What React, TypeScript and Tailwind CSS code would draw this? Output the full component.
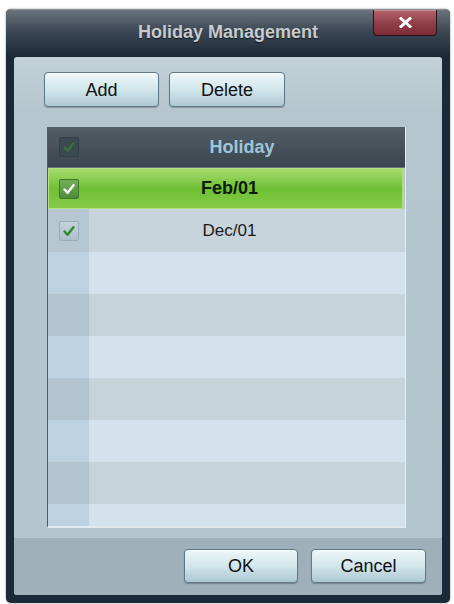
import React from 'react'

const font = "font-['Liberation_Sans',Arial,sans-serif]"

function Check({ variant }: { variant: 'header' | 'on' | 'plain' }) {
  const box =
    variant === 'on'
      ? 'bg-gradient-to-b from-[#74ae58] to-[#4e8c3a] border-[#3f7630]'
      : variant === 'header'
        ? 'bg-[#3b4950] border-[#323f46]'
        : 'bg-gradient-to-b from-[#c4d2d9] to-[#aebfc9] border-[#98abb6]'
  const stroke = variant === 'on' ? '#ffffff' : variant === 'header' ? '#3f6d3c' : '#2f8a2a'
  return (
    <div className={`w-[20px] h-[20px] rounded-[2px] border flex items-center justify-center ${box}`}>
      <svg width="14" height="14" viewBox="0 0 14 14">
        <polyline
          points="2.5,7.5 5.5,10.8 11.5,3.2"
          fill="none"
          stroke={stroke}
          strokeWidth="2.4"
          strokeLinecap="round"
          strokeLinejoin="round"
        />
      </svg>
    </div>
  )
}

function Btn({ label, w, h }: { label: string; w: string; h: string }) {
  return (
    <button
      type="button"
      className={`${w} ${h} rounded-[4px] border border-[#5d7886] bg-gradient-to-b from-[#eef8fa] via-[#d2e6ec] to-[#adc8d3] shadow-[inset_0_1px_0_#ffffff,0_1px_1px_rgba(0,0,0,0.25)] text-[18px] text-[#111] leading-none flex items-center justify-center`}
    >
      {label}
    </button>
  )
}

function Row({ tone, h }: { tone: 'dark' | 'light'; h: string }) {
  return (
    <div className={`flex ${h}`}>
      <div className={`w-[41px] ${tone === 'dark' ? 'bg-[#b1c4d0]' : 'bg-[#bdd3e1]'}`} />
      <div className={`flex-1 ${tone === 'dark' ? 'bg-[#c6d3db]' : 'bg-[#d3e2ec]'}`} />
    </div>
  )
}

export default function App() {
  return (
    <div className={`w-[454px] h-[604px] bg-white pt-[9px] pl-[6px] ${font}`}>
      <div className="w-[444px] h-[594px] rounded-[5px] bg-[#1c2938] flex flex-col overflow-hidden shadow-[0_0_2px_rgba(0,0,0,0.5)]">
        <div className="relative h-[48px] shrink-0 flex items-center justify-center pb-[2px] bg-gradient-to-b from-[#6b747c] via-[#3c4855] via-45% to-[#1c2836] border-t border-[#8a939a]">
          <span className="text-[18px] font-bold text-[#c7cbcf] [text-shadow:0_1px_1px_rgba(0,0,0,0.6)]">
            Holiday Management
          </span>
          <button
            type="button"
            className="absolute right-[13px] top-0 w-[64px] h-[26px] rounded-b-[4px] border border-t-0 border-[#2a1216] bg-gradient-to-b from-[#b4646c] via-[#93404a] to-[#7a2c36] shadow-[inset_0_1px_0_rgba(255,255,255,0.25)] flex items-center justify-center"
          >
            <svg width="13" height="11" viewBox="0 0 13 11">
              <path d="M2 1.5 L11 9.5 M11 1.5 L2 9.5" stroke="#ffffff" strokeWidth="3" strokeLinecap="square" />
            </svg>
          </button>
        </div>

        <div className="flex-1 flex px-[8px] pb-[8px]">
          <div className="flex-1 flex flex-col rounded-[3px] overflow-hidden bg-gradient-to-b from-[#c3d2d9] via-[#b6c6ce] via-10% to-[#b5c5cd]">
            <div className="flex gap-[10px] pt-[15px] pl-[30px]">
              <Btn label="Add" w="w-[115px]" h="h-[35px]" />
              <Btn label="Delete" w="w-[116px]" h="h-[35px]" />
            </div>

            <div className="mt-[20px] ml-[33px] w-[359px] h-[401px] flex flex-col border-l border-l-[#4d5b65] border-r border-r-[#e6eef1] border-b-2 border-b-[#e2eaee] overflow-hidden">
              <div className="h-[41px] shrink-0 flex bg-gradient-to-b from-[#535d65] to-[#3b454f] border-b border-[#6b7780]">
                <div className="w-[41px] flex items-center justify-center">
                  <Check variant="header" />
                </div>
                <div className="flex-1 flex items-center justify-center pr-[10px] text-[18px] font-bold text-[#9ec6da]">
                  Holiday
                </div>
              </div>

              <div className="h-[41px] shrink-0 flex items-center mr-[2px] border border-[#b3e07c] bg-gradient-to-b from-[#a6dc6c] via-[#6fc034] to-[#84ca48]">
                <div className="w-[40px] flex items-center justify-center">
                  <Check variant="on" />
                </div>
                <div className="flex-1 text-center pr-[32px] text-[18px] font-bold text-[#0c1a08]">Feb/01</div>
              </div>

              <div className="h-[43px] shrink-0 flex">
                <div className="w-[41px] bg-[#b6c7d1] flex items-center justify-center">
                  <Check variant="plain" />
                </div>
                <div className="flex-1 bg-[#c8d4dc] flex items-center justify-center pr-[35px] text-[17px] text-[#1a1a1a]">
                  Dec/01
                </div>
              </div>

              <Row tone="light" h="h-[42px] shrink-0" />
              <Row tone="dark" h="h-[42px] shrink-0" />
              <Row tone="light" h="h-[42px] shrink-0" />
              <Row tone="dark" h="h-[42px] shrink-0" />
              <Row tone="light" h="h-[42px] shrink-0" />
              <Row tone="dark" h="h-[42px] shrink-0" />
              <Row tone="light" h="flex-1" />
            </div>

            <div className="flex-1" />

            <div className="h-[57px] shrink-0 bg-[#9fb0bb] flex justify-end items-start gap-[13px] pt-[11px] pr-[16px]">
              <Btn label="OK" w="w-[114px]" h="h-[34px]" />
              <Btn label="Cancel" w="w-[115px]" h="h-[34px]" />
            </div>
          </div>
        </div>
      </div>
    </div>
  )
}
